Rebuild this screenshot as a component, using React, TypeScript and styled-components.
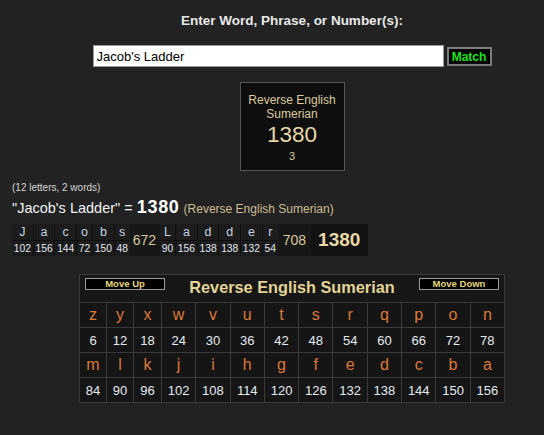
import React from 'react';
import styled, { createGlobalStyle } from 'styled-components';

const GlobalStyle = createGlobalStyle`
  html, body { margin: 0; padding: 0; background: #222222; }
  body { font-family: "Liberation Sans", Arial, sans-serif; }
  #root { width: 544px; height: 435px; overflow: hidden; }
`;

const Page = styled.div`
  width: 544px;
  height: 435px;
  background: #222222;
  display: flex;
  flex-direction: column;
  overflow: hidden;
`;

const CenterRow = styled.div<{ $mt: number }>`
  display: flex;
  justify-content: center;
  align-items: flex-start;
  padding-left: 40px;
  margin-top: ${(p) => p.$mt}px;
`;

const Heading = styled.div`
  font-weight: bold;
  font-size: 13.5px;
  line-height: 15px;
  color: #e8e8e8;
`;

const TextInput = styled.input`
  box-sizing: border-box;
  width: 351px;
  height: 22px;
  margin: 0;
  padding: 0 3px;
  border: 1px solid #9a9a9a;
  background: #ffffff;
  color: #000000;
  font: 13px "Liberation Sans", Arial, sans-serif;
  outline: none;
`;

const MatchButton = styled.button`
  box-sizing: border-box;
  width: 45px;
  height: 19px;
  margin: 2px 0 0 3px;
  padding: 0;
  background: #000000;
  border: 2px solid #7c7c7c;
  color: #1fe01f;
  font: bold 12px "Liberation Sans", Arial, sans-serif;
  line-height: 14px;
`;

const ResultBox = styled.div`
  box-sizing: border-box;
  width: 105px;
  height: 89px;
  background: #0e0e0e;
  border: 1px solid #555555;
  padding-top: 10px;
  display: flex;
  flex-direction: column;
  align-items: center;
  color: #dccb9c;
  text-align: center;
`;

const BoxTitle = styled.div`
  font-size: 12px;
  line-height: 14px;
`;

const BoxValue = styled.div`
  font-size: 22.5px;
  line-height: 26px;
  margin-top: 1px;
  color: #e6d6a8;
`;

const BoxCount = styled.div`
  font-size: 11px;
  line-height: 12px;
  margin-top: 2px;
`;

const Info = styled.div`
  margin: 11px 0 0 12px;
  font-size: 10px;
  line-height: 12px;
  color: #d6d6d6;
`;

const QuoteLine = styled.div`
  margin: 4px 0 0 12px;
  height: 18px;
  line-height: 18px;
  white-space: nowrap;
  font-size: 14.5px;
  color: #eef2f6;
`;

const QuoteTotal = styled.span`
  font-weight: bold;
  font-size: 18px;
  letter-spacing: 0.7px;
  color: #ffffff;
`;

const QuoteCipher = styled.span`
  font-size: 12px;
  color: #cdbd92;
`;

const Breakdown = styled.div`
  align-self: flex-start;
  margin: 8px 0 0 12px;
  height: 32px;
  display: flex;
  background: #101010;
`;

const Word = styled.div`
  display: flex;
  gap: 1px;
`;

const LetterCol = styled.div`
  display: flex;
  flex-direction: column;
  gap: 1px;
  background: #0c0c0c;
`;

const LetterTop = styled.div`
  height: 16px;
  padding: 0 1.75px;
  background: #1c1c1c;
  color: #c4d2e0;
  font-size: 12.5px;
  line-height: 16px;
  text-align: center;
`;

const LetterNum = styled.div`
  height: 15px;
  padding: 0 1.75px;
  background: #1c1c1c;
  color: #e2e8ee;
  font-size: 10.3px;
  line-height: 15px;
  text-align: center;
`;

const SumCell = styled.div<{ $pl: number; $pr: number }>`
  display: flex;
  align-items: center;
  padding: 0 ${(p) => p.$pr}px 0 ${(p) => p.$pl}px;
  background: #171717;
  color: #d8c8a0;
  font-size: 14px;
`;

const TotalCell = styled.div`
  display: flex;
  align-items: center;
  padding: 0 8px 0 7px;
  background: #121212;
  color: #e8d8a6;
  font-weight: bold;
  font-size: 19px;
`;

const Panel = styled.div`
  box-sizing: border-box;
  width: 426px;
  display: grid;
  grid-template-columns: 26px 26px 27px repeat(10, 1fr);
  grid-template-rows: 27px 24px 24px 24px 24px;
  gap: 1px;
  background: #3a3a3a;
  border: 1px solid #3a3a3a;
`;

const PanelHeader = styled.div`
  grid-column: 1 / -1;
  display: flex;
  align-items: flex-start;
  padding: 3px 5px 0 5px;
  background: #171717;
`;

const MoveButton = styled.button`
  box-sizing: border-box;
  width: 80px;
  height: 12px;
  margin: 0;
  padding: 0;
  background: #000000;
  border: 1px solid #9a9a9a;
  color: #e6d47c;
  font: bold 9.5px "Liberation Sans", Arial, sans-serif;
  line-height: 10px;
`;

const PanelTitle = styled.div`
  flex: 1;
  margin-top: -1px;
  text-align: center;
  font-weight: bold;
  font-size: 16.3px;
  line-height: 20px;
  color: #e2d396;
`;

const Cell = styled.div<{ $kind: 'letter' | 'num' }>`
  background: #151515;
  display: flex;
  align-items: center;
  justify-content: center;
  color: ${(p) => (p.$kind === 'letter' ? '#dc783a' : '#e4ebf1')};
  font-size: ${(p) => (p.$kind === 'letter' ? '16px' : '13px')};
`;

const words: { letters: [string, number][]; sum: number; pl: number; pr: number }[] = [
  {
    letters: [['J', 102], ['a', 156], ['c', 144], ['o', 72], ['b', 150], ['s', 48]],
    sum: 672,
    pl: 3,
    pr: 4,
  },
  {
    letters: [['L', 90], ['a', 156], ['d', 138], ['d', 138], ['e', 132], ['r', 54]],
    sum: 708,
    pl: 5,
    pr: 5,
  },
];

const alphabet = 'zyxwvutsrqponmlkjihgfedcba'.split('');
const rowA = alphabet.slice(0, 13).map((l, i) => ({ l, v: (i + 1) * 6 }));
const rowB = alphabet.slice(13).map((l, i) => ({ l, v: (i + 14) * 6 }));

export default function App() {
  return (
    <Page>
      <GlobalStyle />
      <CenterRow $mt={13}>
        <Heading>Enter Word, Phrase, or Number(s):</Heading>
      </CenterRow>
      <CenterRow $mt={17}>
        <TextInput defaultValue="Jacob's Ladder" />
        <MatchButton>Match</MatchButton>
      </CenterRow>
      <CenterRow $mt={15}>
        <ResultBox>
          <BoxTitle>
            Reverse English
            <br />
            Sumerian
          </BoxTitle>
          <BoxValue>1380</BoxValue>
          <BoxCount>3</BoxCount>
        </ResultBox>
      </CenterRow>
      <Info>(12 letters, 2 words)</Info>
      <QuoteLine>
        "Jacob's Ladder" = <QuoteTotal>1380</QuoteTotal> <QuoteCipher>(Reverse English Sumerian)</QuoteCipher>
      </QuoteLine>
      <Breakdown>
        {words.map((w, wi) => (
          <React.Fragment key={wi}>
            <Word>
              {w.letters.map(([l, v], i) => (
                <LetterCol key={i}>
                  <LetterTop>{l}</LetterTop>
                  <LetterNum>{v}</LetterNum>
                </LetterCol>
              ))}
            </Word>
            <SumCell $pl={w.pl} $pr={w.pr}>{w.sum}</SumCell>
          </React.Fragment>
        ))}
        <TotalCell>1380</TotalCell>
      </Breakdown>
      <CenterRow $mt={18}>
        <Panel>
          <PanelHeader>
            <MoveButton>Move Up</MoveButton>
            <PanelTitle>Reverse English Sumerian</PanelTitle>
            <MoveButton>Move Down</MoveButton>
          </PanelHeader>
          {rowA.map((c) => (
            <Cell key={'a' + c.l} $kind="letter">{c.l}</Cell>
          ))}
          {rowA.map((c) => (
            <Cell key={'an' + c.l} $kind="num">{c.v}</Cell>
          ))}
          {rowB.map((c) => (
            <Cell key={'b' + c.l} $kind="letter">{c.l}</Cell>
          ))}
          {rowB.map((c) => (
            <Cell key={'bn' + c.l} $kind="num">{c.v}</Cell>
          ))}
        </Panel>
      </CenterRow>
    </Page>
  );
}
